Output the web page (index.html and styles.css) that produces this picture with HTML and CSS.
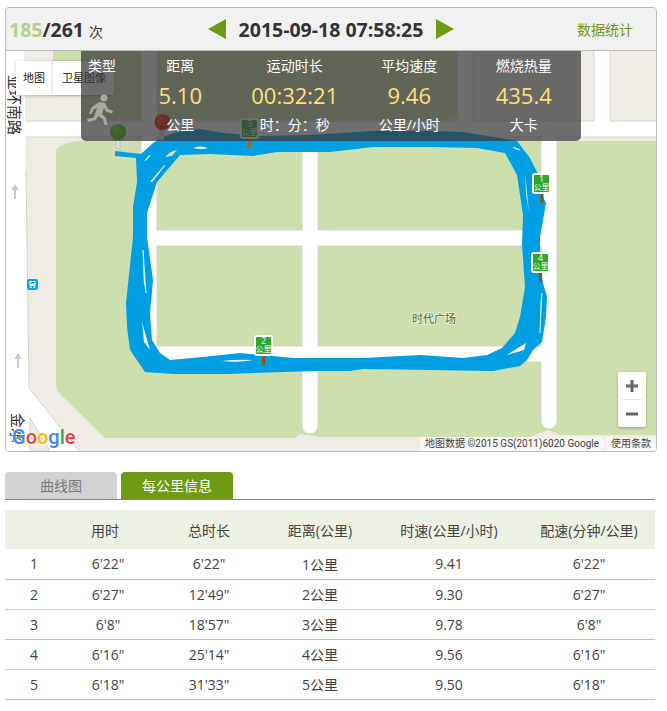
FILE: index.html
```html
<!DOCTYPE html>
<html lang="zh-CN">
<head>
    <title>跑步记录</title>
    <meta charset="UTF-8">
    <link rel="stylesheet" href="styles.css">
</head>
<body>

    <section class="panel">
        <header class="topbar">
            <div class="count"><b class="count-now">185</b><b>/261</b> <span class="count-unit">次</span></div>
            <div class="date-nav">
                <svg class="arrow" width="18" height="20" viewBox="0 0 18 20"><path d="M18 0V20L0 10Z"/></svg>
                <b class="date">2015-09-18 07:58:25</b>
                <svg class="arrow" width="18" height="20" viewBox="0 0 18 20"><path d="M0 0V20L18 10Z"/></svg>
            </div>
            <a class="stats-link">数据统计</a>
        </header>

        <div class="map">
            <svg class="map-bg" width="650" height="400" viewBox="6 51 650 400">
                <defs>
                    <radialGradient id="pin-green" cx="40%" cy="35%" r="70%">
                        <stop offset="0" stop-color="#7cf020"/><stop offset="1" stop-color="#3fb000"/>
                    </radialGradient>
                    <radialGradient id="pin-red" cx="40%" cy="35%" r="70%">
                        <stop offset="0" stop-color="#ff3a20"/><stop offset="1" stop-color="#d80a00"/>
                    </radialGradient>
                </defs>
                <rect x="6" y="51" width="650" height="400" fill="#efece5"/>

                <!-- parks -->
                <g fill="#cddfac">
                    <path d="M53 51H141V120H81V95H60Q53 95 53 88Z"/>
                    <path d="M157 51H457V112Q457 120 449 120H157Z"/>
                    <path d="M60 146Q70 141 80 141H656V435H560L548 430L530 437H320L300 434L295 438H105L60 394Q56 390 56 384V150Z"/>
                </g>

                <!-- roads -->
                <g fill="none" stroke="#d9d4cb" stroke-width="17">
                    <path d="M24 129H656"/>
                    <path d="M465 51V129"/>
                    <path d="M602 51V129"/>
                    <path d="M149 129V354H549"/>
                    <path d="M149 238H549"/>
                    <path d="M310 129V425" stroke-linecap="round"/>
                    <path d="M549 129V420" stroke-linecap="round"/>
                </g>
                <g fill="none" stroke="#fff" stroke-width="15">
                    <path d="M24 129H656"/>
                    <path d="M149 51V354H549"/>
                    <path d="M149 238H549"/>
                    <path d="M465 51V129"/>
                    <path d="M602 51V129"/>
                    <path d="M310 129V426" stroke-linecap="round"/>
                    <path d="M549 129V421" stroke-linecap="round"/>
                </g>
                <path d="M6 51H24L26 170L29 388L79 451H6Z" fill="#fff"/>
                <path d="M29 388L79 451" stroke="#d9d4cb" fill="none"/>
                <path d="M26 170L29 388" stroke="#d9d4cb" fill="none"/>
                <path d="M30 418L50 451H30Z" fill="#efece5" stroke="#d9d4cb"/>

                <!-- road labels and one-way arrows -->
                <text class="road-label" transform="translate(9 75) rotate(90)">亚环南路</text>
                <text class="road-label" transform="translate(12 413) rotate(90)">金水</text>
                <text class="place-label" x="412" y="323">时代广场</text>
                <path d="M15 184l-3.500 6h2.500v9h2v-9h2.500Z" fill="#c3c8d6"/>
                <path d="M18 353l-3.500 6h2.500v9h2v-9h2.500Z" fill="#c3c8d6"/>

                <!-- bus stop -->
                <rect x="27" y="279" width="11" height="11" rx="2" fill="#0aa5f0"/>
                <path d="M29.500 281h6v5h-6Z" fill="#fff"/>
                <path d="M30.500 282h4v1.500h-4Z" fill="#0aa5f0"/>
                <path d="M30 286.500h1.500v1.500h-1.500ZM33.500 286.500h1.500v1.500h-1.500Z" fill="#fff"/>

                <!-- route -->
                <path fill="#009fe3" fill-rule="evenodd" d="M115 151L141 154L153 143L163 137L177 132L200 129L223 133L260 136L310 135L373 131L430 131L463 132L517 141L530 158L537 172L542 195L546 203L540 237L540 262L543 283L547 297L546 317L542 342L533 350L527 360L520 366L493 371L430 370L363 369L350 371L317 371L228 374L173 374L145 372L130 350L127 327L126 303L133 237L133 207L137 182L136 158L115 156Z M330 152L373 147L430 147L477 148L505 153L517 175L523 215L522 245L525 287L520 317L515 333L502 348L487 355L463 358L420 355L363 358L293 358L263 355L240 353L203 357L170 360L160 353L152 340L150 313L153 280L147 237L147 213L157 182L180 155L210 154L253 156L277 152Z"/>
                <g fill="#fff">
                    <path d="M145 161L150 155L146 160Z" stroke="#fff"/>
                    <path d="M151 181L165 165L152 182Z" stroke="#fff" stroke-width=".6"/>
                    <path d="M193 148Q200 145 208 148Q200 150 193 148Z"/>
                    <path d="M513 147L520 150L516 149Z" stroke="#fff" stroke-width=".6"/>
                    <path d="M143 250L146 293L144 280Z" stroke="#fff" stroke-width=".6"/>
                    <path d="M142 322L150 350L144 342Z"/>
                    <path d="M222 361Q238 359 253 360Q238 363 222 361Z"/>
                    <path d="M507 355L526 343L524 350Z"/>
                    <path d="M542 293L540 333L541 300Z" stroke="#fff" stroke-width=".5"/>
                </g>
                <path d="M165 157Q170 151 177 150L172 156Z" fill="#cddfac"/>
                <path d="M525 172L529 212L526 195Z" fill="#cddfac"/>

                <!-- start and end pins -->
                <rect x="116" y="134" width="4" height="15" fill="#ddd" stroke="#aaa" stroke-width=".5"/>
                <circle cx="118" cy="132" r="8" fill="url(#pin-green)"/>
                <rect x="160" y="125" width="4" height="15" fill="#ddd" stroke="#aaa" stroke-width=".5"/>
                <circle cx="162.500" cy="122" r="8" fill="url(#pin-red)"/>

                <!-- kilometre markers -->
                <g class="km-marker" transform="translate(532 173)">
                    <rect x="8.500" y="20" width="3" height="10" fill="#85581a"/>
                    <rect x="1" y="1" width="17" height="19" rx="2" fill="#2ea52e" stroke="#fff" stroke-width="2"/>
                    <text class="km-num" x="9.500" y="9">1</text>
                    <text class="km-text" x="9.500" y="17">公里</text>
                </g>
                <g class="km-marker" transform="translate(531 252)">
                    <rect x="8" y="20" width="3" height="10" fill="#85581a"/>
                    <rect x="1" y="1" width="17" height="19" rx="2" fill="#2ea52e" stroke="#fff" stroke-width="2"/>
                    <text class="km-num" x="9.500" y="9">4</text>
                    <text class="km-text" x="9.500" y="17">公里</text>
                </g>
                <g class="km-marker" transform="translate(254 335)">
                    <rect x="8" y="20" width="3" height="10" fill="#85581a"/>
                    <rect x="1" y="1" width="17" height="19" rx="2" fill="#2ea52e" stroke="#fff" stroke-width="2"/>
                    <text class="km-num" x="9.500" y="9">2</text>
                    <text class="km-text" x="9.500" y="17">公里</text>
                </g>
                <g class="km-marker" transform="translate(240 118)">
                    <rect x="8" y="20" width="3" height="10" fill="#a8650f"/>
                    <rect x="1" y="1" width="17" height="19" rx="2" fill="#2ea52e" stroke="#fff" stroke-width="2"/>
                    <text class="km-num" x="9.500" y="9">3</text>
                    <text class="km-text" x="9.500" y="17">公里</text>
                </g>
            </svg>

            <div class="map-type">
                <span class="map-type-item">地图</span>
                <span class="map-type-item map-type-sat">卫星图像</span>
            </div>

            <div class="summary">
                <div class="stat">
                    <span>类型</span>
                    <svg class="walker" width="30" height="32" viewBox="0 0 30 32" fill="#a9a9a0">
                        <circle cx="19" cy="4" r="3.500"/>
                        <path d="M14 8L20 9L23 15L28 17L27 19.500L21 17.500L19 14L17 20L21 24L22.500 31H19.500L18 25.500L13 22L11 26L3 28L2 25L9 23.500L12 14L8.500 15.500L6.500 20H4L6.500 13.500Z"/>
                    </svg>
                </div>
                <div class="stat"><span>距离</span><b class="stat-val">5.10</b><span>公里</span></div>
                <div class="stat"><span>运动时长</span><b class="stat-val">00:32:21</b><span>时：分：秒</span></div>
                <div class="stat"><span>平均速度</span><b class="stat-val">9.46</b><span>公里/小时</span></div>
                <div class="stat"><span>燃烧热量</span><b class="stat-val">435.4</b><span>大卡</span></div>
            </div>

            <div class="zoom-ctl">
                <button class="zoom-btn"><svg width="12" height="12" viewBox="0 0 12 12"><path d="M4.500 0h3v4.500H12v3H7.500V12h-3V7.500H0v-3h4.500Z"/></svg></button>
                <button class="zoom-btn"><svg width="12" height="12" viewBox="0 0 12 12"><path d="M0 4.500h12v3H0Z"/></svg></button>
            </div>

            <div class="google"><span class="g-blue">G</span><span class="g-red">o</span><span class="g-yellow">o</span><span class="g-blue">g</span><span class="g-green">l</span><span class="g-red">e</span></div>

            <div class="credits">
                <span class="credit">地图数据 ©2015 GS(2011)6020 Google</span>
                <span class="credit">使用条款</span>
            </div>
        </div>
    </section>

    <nav class="tabs">
        <a class="tab">曲线图</a>
        <a class="tab tab-on">每公里信息</a>
    </nav>

    <table class="km-table">
        <thead>
            <tr><th></th><th class="th-used">用时</th><th>总时长</th><th>距离(公里)</th><th>时速(公里/小时)</th><th>配速(分钟/公里)</th></tr>
        </thead>
        <tbody>
            <tr><td>1</td><td>6'22"</td><td>6'22"</td><td>1公里</td><td>9.41</td><td>6'22"</td></tr>
            <tr><td>2</td><td>6'27"</td><td>12'49"</td><td>2公里</td><td>9.30</td><td>6'27"</td></tr>
            <tr><td>3</td><td>6'8"</td><td>18'57"</td><td>3公里</td><td>9.78</td><td>6'8"</td></tr>
            <tr><td>4</td><td>6'16"</td><td>25'14"</td><td>4公里</td><td>9.56</td><td>6'16"</td></tr>
            <tr><td>5</td><td>6'18"</td><td>31'33"</td><td>5公里</td><td>9.50</td><td>6'18"</td></tr>
        </tbody>
    </table>

</body>
</html>
```

FILE: styles.css
```css
* {
    box-sizing: border-box;
}

body {
    margin: 7px 10px 0 5px;
    font-family: "Open Sans", "Noto Sans CJK SC", sans-serif;
    font-size: 14px;
    color: #444;
    background: #fff;
}

.panel {
    border: 1px solid #bbb;
    border-radius: 4px;
    overflow: hidden;
}

.topbar {
    height: 43px;
    display: grid;
    grid-template-columns: 1fr auto 1fr;
    align-items: center;
    padding: 0 3px;
    background: #f1f1f1;
    border-bottom: 1px solid #bbb;
}

.count {
    font-size: 19.500px;
    color: #333;
}

.count-now {
    color: #b4d08f;
}

.count-unit {
    font-size: 14px;
}

.date-nav {
    display: flex;
    align-items: center;
    gap: 13px;
}

.date {
    font-size: 19.500px;
    color: #333;
}

.arrow {
    fill: #6f9b14;
}

.stats-link {
    justify-self: end;
    margin-right: 20px;
    color: #6f9b14;
}

.map {
    position: relative;
    height: 400px;
    overflow: hidden;
}

.map-bg {
    display: block;
}

.road-label {
    font-size: 15px;
    fill: #333;
}

.place-label {
    font-size: 11px;
    fill: #4f7032;
    stroke: #e4eed0;
    stroke-width: 2px;
    paint-order: stroke;
}

.km-marker text {
    fill: #fff;
    text-anchor: middle;
}

.km-num {
    font-size: 9px;
}

.km-text {
    font-size: 8px;
}

.map-type {
    position: absolute;
    left: 10px;
    top: 10px;
    height: 34px;
    display: flex;
    background: #fff;
    box-shadow: 0 1px 3px rgba(0, 0, 0, .25);
    font-size: 11px;
    color: #222;
}

.map-type-item {
    padding: 0 8px 0 7px;
    line-height: 34px;
}

.map-type-sat {
    width: 61px;
    padding: 0 0 0 9px;
    white-space: nowrap;
    box-shadow: -1px 0 2px rgba(0, 0, 0, .15);
}

.summary {
    position: absolute;
    left: 75px;
    top: 0;
    width: 500px;
    height: 90px;
    display: grid;
    grid-template-columns: 42px repeat(4, 1fr);
    padding-top: 5px;
    background: rgba(54, 54, 54, .72);
    border-radius: 0 0 5px 5px;
    color: #fff;
    font-size: 14px;
}

.stat {
    display: flex;
    flex-direction: column;
    align-items: center;
    white-space: nowrap;
}

.stat span {
    line-height: 20px;
}

.stat-val {
    height: 39px;
    line-height: 39px;
    font-size: 22px;
    font-weight: 400;
    color: #ffe07a;
}

.walker {
    margin: 18px 4px 0 0;
}

.zoom-ctl {
    position: absolute;
    right: 10px;
    bottom: 24px;
    width: 28px;
    height: 55px;
    display: flex;
    flex-direction: column;
    background: #fff;
    border-radius: 2px;
    box-shadow: 0 1px 3px rgba(0, 0, 0, .3);
}

.zoom-btn {
    flex: 1;
    display: flex;
    align-items: center;
    justify-content: center;
    padding: 0;
    border: 0;
    background: none;
    fill: #666;
}

.zoom-btn + .zoom-btn {
    border-top: 1px solid #e6e6e6;
    margin: 0 4px;
}

.google {
    position: absolute;
    left: 6px;
    bottom: 1px;
    font-family: Roboto, sans-serif;
    font-size: 20px;
    font-weight: 500;
    line-height: 26px;
    text-shadow: 0 0 2px #fff, 0 0 2px #fff;
}

.g-blue { color: #4285f4; }
.g-red { color: #ea4335; }
.g-yellow { color: #fbbc05; }
.g-green { color: #34a853; }

.credits {
    position: absolute;
    right: 0;
    bottom: 0;
    display: flex;
    gap: 2px;
    font-family: Roboto, "Noto Sans CJK SC", sans-serif;
    font-size: 10px;
    color: #444;
}

.credit {
    height: 14px;
    line-height: 14px;
    padding: 0 5px;
    background: rgba(255, 255, 255, .55);
    white-space: nowrap;
}

.tabs {
    display: flex;
    gap: 4px;
    height: 28px;
    margin: 20px 2px 0 0;
    border-bottom: 1px solid #7a9a3e;
}

.tab {
    width: 112px;
    height: 27px;
    line-height: 27px;
    text-align: center;
    background: #d2d2d2;
    color: #777;
    border-radius: 4px 4px 0 0;
}

.tab-on {
    background: #6f9b14;
    color: #fff;
}

.km-table {
    width: 650px;
    margin-top: 10px;
    border-collapse: collapse;
    table-layout: fixed;
}

.km-table th {
    height: 39px;
    padding: 0;
    background: #edf1e3;
    font-weight: 400;
}

.km-table .th-used {
    padding-right: 6px;
}

.km-table td {
    height: 30px;
    padding: 0;
    text-align: center;
    border-bottom: 1px solid #ccc;
}

.km-table tr:nth-child(odd) td {
    border-bottom-color: #f0c52e;
}

.km-table th:nth-child(1) { width: 58px; }
.km-table th:nth-child(2) { width: 90px; }
.km-table th:nth-child(3) { width: 112px; }
.km-table th:nth-child(4) { width: 110px; }
.km-table th:nth-child(5) { width: 148px; }
```
